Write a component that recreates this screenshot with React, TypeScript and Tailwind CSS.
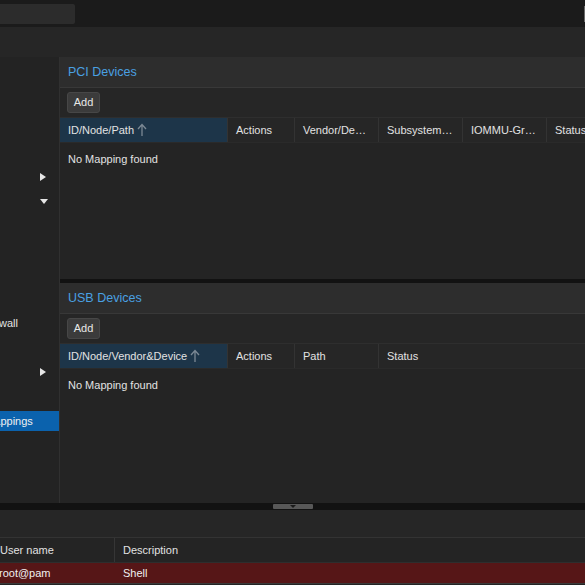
import React from "react";

const font = { fontFamily: '"Liberation Sans", Arial, sans-serif' };

function RightArrow() {
  return (
    <svg width="6" height="8" viewBox="0 0 6 8" className="block">
      <path d="M0 0 L6 4 L0 8 Z" fill="#e6e6e6" />
    </svg>
  );
}
function DownArrow() {
  return (
    <svg width="8" height="5" viewBox="0 0 8 5" className="block">
      <path d="M0 0 L8 0 L4 5 Z" fill="#e6e6e6" />
    </svg>
  );
}
function SortUp() {
  return (
    <svg width="10" height="14" viewBox="0 0 10 14" className="block">
      <path d="M5 13 V2 M1 6 L5 1.5 L9 6" stroke="#7b8894" strokeWidth="1.3" fill="none" />
    </svg>
  );
}

type Col = { label: string; w: string; sorted?: boolean; last?: boolean };

function Panel({ title, cols, h }: { title: string; cols: Col[]; h: string }) {
  return (
    <div className={`flex flex-col ${h} shrink-0 min-h-0 bg-[#242424]`}>
      <div className="h-[31px] shrink-0 bg-[#2d2d2d] border-b border-[#383838] flex items-center pl-[8px]">
        <span className="text-[12.5px] text-[#4aa0e2]">{title}</span>
      </div>
      <div className="h-[30px] shrink-0 flex items-center pl-[7px] border-b border-[#2e2e2e] bg-[#262626]">
        <div className="h-[21px] w-[33px] rounded-[3px] bg-[#3b3b3b] border border-[#474747] flex items-center justify-center text-[11px] text-[#e8e8e8]">
          Add
        </div>
      </div>
      <div className="h-[25px] shrink-0 flex bg-[#262626] border-b border-[#2a2a2a]">
        {cols.map((c, i) => (
          <div
            key={i}
            className={`${c.w} shrink-0 flex items-center pl-[8px] text-[11px] text-[#e2e2e2] whitespace-nowrap overflow-hidden ${
              c.sorted ? "bg-[#1d3549]" : ""
            } ${c.last ? "" : "border-r border-[#333333]"}`}
          >
            <span>{c.label}</span>
            {c.sorted && (
              <span className="ml-[3px]">
                <SortUp />
              </span>
            )}
          </div>
        ))}
      </div>
      <div className="pl-[8px] pt-[8px] text-[11px] text-[#e2e2e2]">No Mapping found</div>
    </div>
  );
}

export default function App() {
  const navRows: { text?: string; ml?: string; arrow?: "r" | "d"; selected?: boolean }[] = [
    {},
    {},
    {},
    {},
    { arrow: "r" },
    { arrow: "d" },
    {},
    {},
    {},
    {},
    { text: "Firewall", ml: "ml-[-20px]" },
    {},
    { arrow: "r" },
    {},
    { text: "Resource Mappings", ml: "ml-[-65px]", selected: true },
  ];

  return (
    <div className="w-[585px] h-[585px] overflow-hidden bg-[#232323] flex flex-col" style={font}>
      {/* top bar */}
      <div className="h-[27px] shrink-0 bg-[#1b1b1b] flex items-center justify-between">
        <div className="h-[20px] w-[75px] bg-[#2c2c2c] rounded-r-[2px]" />
        <div className="h-[16px] w-[1px] bg-[#6a6a6a]" />
      </div>
      {/* second bar */}
      <div className="h-[30px] shrink-0 bg-[#262626]" />
      {/* main */}
      <div className="flex h-[446px] shrink-0">
        <div className="w-[60px] shrink-0 border-r border-[#303030] bg-[#232323] pt-[10.5px] overflow-hidden">
          {navRows.map((r, i) => (
            <div key={i} className="h-[24.4px] flex items-center relative">
              {r.selected ? (
                <div className="h-[20px] w-full bg-[#0b62ad] flex items-center">
                  <span className={`${r.ml} text-[11px] text-[#f0f0f0] whitespace-nowrap`}>{r.text}</span>
                </div>
              ) : r.text ? (
                <span className={`${r.ml} text-[11px] text-[#e2e2e2] whitespace-nowrap`}>{r.text}</span>
              ) : null}
              {r.arrow && (
                <div className="absolute left-[40px] top-0 h-full flex items-center">
                  {r.arrow === "r" ? <RightArrow /> : <DownArrow />}
                </div>
              )}
            </div>
          ))}
        </div>
        <div className="flex-1 flex flex-col min-w-0">
          <Panel
            h="h-[222px]"
            title="PCI Devices"
            cols={[
              { label: "ID/Node/Path", w: "w-[168px]", sorted: true },
              { label: "Actions", w: "w-[67px]" },
              { label: "Vendor/De…", w: "w-[84px]" },
              { label: "Subsystem…", w: "w-[84px]" },
              { label: "IOMMU-Gr…", w: "w-[84px]" },
              { label: "Status", w: "w-[60px]", last: true },
            ]}
          />
          <div className="h-[4px] shrink-0 bg-[#121212]" />
          <Panel
            h="h-[220px]"
            title="USB Devices"
            cols={[
              { label: "ID/Node/Vendor&Device", w: "w-[168px]", sorted: true },
              { label: "Actions", w: "w-[67px]" },
              { label: "Path", w: "w-[84px]" },
              { label: "Status", w: "w-[84px]", last: true },
            ]}
          />
        </div>
      </div>
      {/* bottom splitter */}
      <div className="h-[7px] shrink-0 bg-[#121212] flex items-start pl-[273px]">
        <div className="mt-[1px] h-[5px] w-[40px] bg-[#585858] rounded-[1px] flex justify-center">
          <svg width="6" height="3" viewBox="0 0 6 3" className="block mt-[1px]">
            <path d="M0 0 L6 0 L3 3 Z" fill="#1a1a1a" />
          </svg>
        </div>
      </div>
      {/* bottom panel */}
      <div className="flex-1 flex flex-col bg-[#242424]">
        <div className="h-[28px] shrink-0 bg-[#262626] border-b border-[#333333]" />
        <div className="h-[25px] shrink-0 flex border-b border-[#2e2e2e]">
          <div className="w-[115px] shrink-0 border-r border-[#363636] flex items-center text-[11px] text-[#e2e2e2] whitespace-nowrap">
            User name
          </div>
          <div className="flex items-center pl-[8px] text-[11px] text-[#e2e2e2]">Description</div>
        </div>
        <div className="h-[21px] shrink-0 flex bg-[#561617] border-b border-[#3a3a3a]">
          <div className="w-[115px] shrink-0 flex items-center ml-[-1px] text-[11px] text-[#f0f0f0] whitespace-nowrap">
            root@pam
          </div>
          <div className="flex items-center pl-[9px] text-[11px] text-[#f0f0f0]">Shell</div>
        </div>
      </div>
    </div>
  );
}
